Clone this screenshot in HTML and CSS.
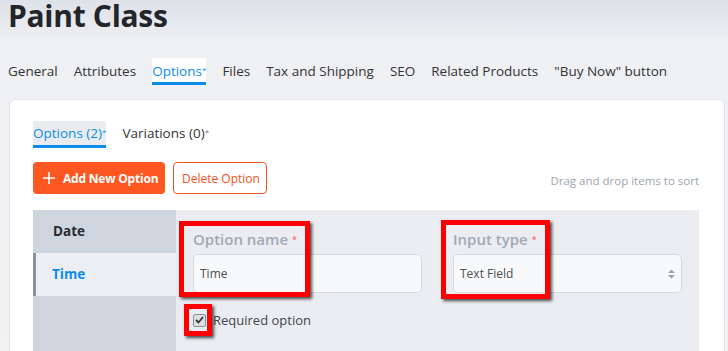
FILE: index.html
```html
<!DOCTYPE html>
<html lang="en">
<head>
    <meta charset="UTF-8">
    <meta name="viewport" content="width=device-width, initial-scale=1.0">
    <title>Paint Class</title>
    <link rel="stylesheet" href="styles.css">
</head>
<body>

    <h1 class="title">Paint Class</h1>

    <nav class="tabs">
        <a class="tab">General</a>
        <a class="tab">Attributes</a>
        <a class="tab active">Options<span class="star">*</span></a>
        <a class="tab">Files</a>
        <a class="tab">Tax and Shipping</a>
        <a class="tab">SEO</a>
        <a class="tab">Related Products</a>
        <a class="tab">"Buy Now" button</a>
    </nav>

    <div class="card">
        <div class="subtabs">
            <a class="subtab active">Options (2)<span class="star">*</span></a>
            <a class="subtab">Variations (0)<span class="star grey">*</span></a>
        </div>

        <div class="toolbar">
            <button class="btn btn-add">
                <svg width="12" height="12" viewBox="0 0 12 12"><path d="M6 0v12M0 6h12" stroke="#fff" stroke-width="1.6"/></svg>
                Add New Option
            </button>
            <button class="btn btn-delete">Delete Option</button>
            <span class="hint">Drag and drop items to sort</span>
        </div>

        <div class="panel">
            <ul class="option-list">
                <li class="option-item">Date</li>
                <li class="option-item selected">Time</li>
            </ul>
            <div class="option-form">
                <div class="fields">
                    <div class="field">
                        <label class="field-label">Option name <span class="req">*</span></label>
                        <div class="input">Time</div>
                    </div>
                    <div class="field">
                        <label class="field-label">Input type <span class="req">*</span></label>
                        <div class="input select">
                            Text Field
                            <svg class="arrows" width="7" height="10" viewBox="0 0 7 10"><path d="M0 4L3.5 0.5 7 4zM0 6l3.5 3.5L7 6z" fill="#9aa4b2"/></svg>
                        </div>
                    </div>
                </div>
                <label class="check">
                    <span class="box">
                        <svg width="9" height="8" viewBox="0 0 9 8"><path d="M1 4l2.5 2.5L8 1" stroke="#333" stroke-width="1.8" fill="none"/></svg>
                    </span>
                    Required option
                </label>
            </div>
        </div>
    </div>

    <div class="mark mark-name"></div>
    <div class="mark mark-type"></div>
    <div class="mark mark-check"></div>

</body>
</html>
```

FILE: styles.css
```css
body {
    font-family: "Open Sans", "Noto Sans", sans-serif;
    background: linear-gradient(#dde2e8 0px, #eff0f3 45px, #f0f1f3 100%);
    background-color: #f0f1f3;
    color: #333;
    margin: 0;
    padding: 0 0 0 8px;
    height: 351px;
    overflow: hidden;
}

.title {
    margin: 0;
    font-size: 30px;
    line-height: 32px;
    font-weight: 700;
    color: #222529;
    letter-spacing: -0.3px;
}

.tabs {
    display: flex;
    gap: 16px;
    margin-top: 26px;
    height: 27px;
}

.tab {
    font-size: 13.5px;
    color: #333;
    padding-top: 2px;
    line-height: 22px;
}

.tab.active {
    color: #0b8ce9;
    background: #fff;
    border-bottom: 3px solid #0b8ce9;
    border-radius: 2px 2px 0 0;
}

.star {
    font-size: 8px;
    vertical-align: 3px;
    line-height: 10px;
}

.star.grey {
    color: #777;
}

.card {
    margin-top: 14px;
    margin-left: 1px;
    width: 716px;
    height: 252px;
    background: #fff;
    border: 1px solid #e1e3e7;
    border-bottom: none;
    border-radius: 6px 6px 0 0;
    padding: 21px 0 0 23px;
    box-sizing: border-box;
}

.subtabs {
    display: flex;
    gap: 16px;
    height: 27px;
}

.subtab {
    font-size: 13.5px;
    line-height: 24px;
    color: #333;
}

.subtab.active {
    color: #0b8ce9;
    background: #eaecf0;
    border-bottom: 3px solid #0b8ce9;
    border-radius: 2px 2px 0 0;
}

.toolbar {
    display: flex;
    align-items: center;
    gap: 8px;
    margin-top: 14px;
    width: 666px;
}

.btn {
    font-family: inherit;
    height: 32px;
    border-radius: 4px;
    font-size: 12px;
    cursor: pointer;
    display: flex;
    align-items: center;
    gap: 8px;
    box-sizing: border-box;
}

.btn-add {
    background: #ff5722;
    border: none;
    color: #fff;
    font-weight: 700;
    letter-spacing: -0.2px;
    width: 132px;
    padding: 0 0 0 10px;
}

.btn-delete {
    background: #fff;
    border: 1px solid #f4511e;
    color: #f4511e;
    width: 94px;
    padding: 0 0 0 8px;
}

.hint {
    margin-left: auto;
    font-size: 11.5px;
    color: #9ba4b0;
    padding-top: 5px;
}

.panel {
    display: flex;
    margin-top: 16px;
    width: 666px;
    height: 141px;
    background: #ecedf2;
}

.option-list {
    list-style: none;
    margin: 0;
    padding: 0;
    width: 143px;
    background: #cfd5df;
}

.option-item {
    height: 43px;
    line-height: 43px;
    padding-left: 20px;
    font-size: 13.5px;
    font-weight: 700;
    color: #262a30;
}

.option-item.selected {
    background: #eceef3;
    color: #0b8ce9;
    border-left: 3px solid #8d9199;
    padding-left: 16px;
}

.option-form {
    flex: 1;
    padding: 20px 17px 0 17px;
}

.fields {
    display: flex;
    gap: 31px;
}

.field {
    width: 229px;
}

.field-label {
    display: block;
    font-size: 15px;
    font-weight: 600;
    color: #a2a9b4;
    line-height: 18px;
    margin-bottom: 5px;
}

.req {
    color: #f0524a;
    font-size: 9px;
    font-weight: 400;
    vertical-align: 2px;
}

.input {
    height: 39px;
    box-sizing: border-box;
    border: 1px solid #d6d9de;
    border-radius: 5px;
    background: #f8f9fa;
    font-size: 12px;
    color: #4a4f55;
    padding-left: 6px;
    display: flex;
    align-items: center;
}

.select {
    justify-content: space-between;
    padding-right: 6px;
}

.check {
    display: flex;
    align-items: center;
    gap: 7px;
    margin-top: 18px;
    font-size: 13px;
    line-height: 18px;
    color: #40454b;
}

.box {
    width: 13px;
    height: 13px;
    box-sizing: border-box;
    border: 1px solid #8b8f95;
    border-radius: 2px;
    background: #dcdfe3;
    display: flex;
    align-items: center;
    justify-content: center;
}

.mark {
    position: absolute;
    border: 5px solid #ff0000;
    box-sizing: border-box;
    box-shadow: 2px 2px 3px rgba(0, 0, 0, 0.7);
}

.mark-name {
    left: 179px;
    top: 221px;
    width: 131px;
    height: 76px;
}

.mark-type {
    left: 441px;
    top: 220px;
    width: 109px;
    height: 79px;
}

.mark-check {
    left: 184px;
    top: 304px;
    width: 28px;
    height: 32px;
}
```
